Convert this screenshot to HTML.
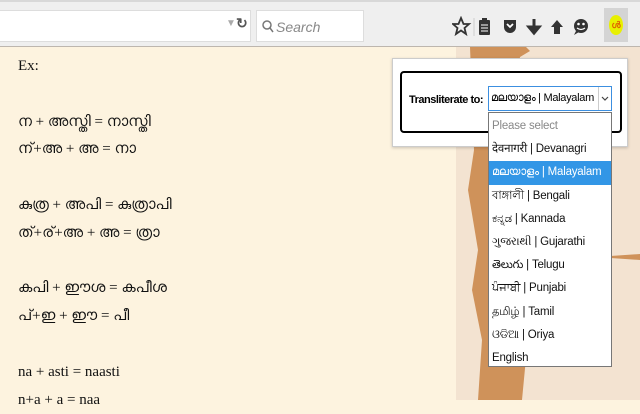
<!DOCTYPE html>
<html><head><meta charset="utf-8"><style>
*{margin:0;padding:0;box-sizing:border-box}
body{width:640px;height:400px;overflow:hidden;position:relative;background:#fdf3df;font-family:"Liberation Serif",serif}
#tb{position:absolute;left:0;top:0;width:640px;height:47px;background:#efefef;border-top:2px solid #d8d8d8;border-bottom:1px solid #bdb6ae}
#url{position:absolute;left:0;top:8px;width:251px;height:32px;background:#fff;border:1px solid #ddd;border-left:none}
#srch{position:absolute;left:256px;top:8px;width:108px;height:32px;background:#fff;border:1px solid #ddd;font:italic 14px "Liberation Sans",sans-serif;color:#888;padding:8px 0 0 19px}
#right{position:absolute;left:456px;top:47px;width:184px;height:353px;background:#f3e3d1}
#ex{position:absolute;left:18px;top:53px;font-size:15px;color:#111;line-height:27.8px}
#panel{position:absolute;left:392px;top:58px;width:236px;height:89px;background:#fff;border:1px solid #ccc;box-shadow:0 1px 3px rgba(0,0,0,.2)}
#box{position:absolute;left:7px;top:12px;width:222px;height:62px;border:2px solid #000;border-radius:4px}
#lab{position:absolute;left:7px;top:21px;font:bold 11px "Liberation Sans",sans-serif;color:#000;letter-spacing:-0.5px}
#sel{position:absolute;left:488px;top:86px;width:124px;height:25px;border:1px solid #3c8fe0;background:#fff;font:11px "Liberation Sans",sans-serif;padding:5px 2px;overflow:hidden;white-space:nowrap;letter-spacing:-0.3px}
#sel .a{position:absolute;right:0;top:0;width:13px;height:23px;border-left:1px solid #ccc;background:#fff}
#list{position:absolute;left:488px;top:112px;width:124px;height:255px;background:#fff;border:1px solid #777;font:11.5px "Liberation Sans","Noto Sans CJK SC",sans-serif;padding-top:2px;letter-spacing:-0.2px}
#list div{height:23.2px;line-height:23px;padding-left:3px;color:#111;white-space:nowrap;overflow:hidden}
#list .p{color:#888}
#list .h{background:#3296e6;color:#fff}
</style></head><body>
<div id="tb">
<div id="url"><span style="position:absolute;left:226px;top:7px;color:#aaa;font:10px sans-serif">▼</span><span style="position:absolute;left:236px;top:4px;color:#555;font:bold 14px sans-serif">↻</span></div>
<div id="srch"><svg style="position:absolute;left:5px;top:9px" width="12" height="13"><circle cx="5" cy="5" r="4" fill="none" stroke="#777" stroke-width="1.5"/><line x1="8" y1="8" x2="11" y2="12" stroke="#777" stroke-width="1.5"/></svg>Search</div>
<svg style="position:absolute;left:452px;top:14px" width="190" height="24">
<polygon points="9,2 11.5,8 17,8 12.5,12 14,18 9,14.5 4,18 5.5,12 1,8 6.5,8" fill="none" stroke="#333" stroke-width="1.8"/>
<line x1="22" y1="2" x2="22" y2="20" stroke="#ccc"/>
<rect x="27" y="4" width="11" height="15" rx="1" fill="#333"/><rect x="30" y="2" width="5" height="3" fill="#333"/><line x1="29" y1="9" x2="36" y2="9" stroke="#fff"/><line x1="29" y1="12" x2="36" y2="12" stroke="#fff"/><line x1="29" y1="15" x2="36" y2="15" stroke="#fff"/>
<path d="M52 4h12v7a6 6 0 0 1-12 0z" fill="#333"/><path d="M55 8l3 3 3-3" fill="none" stroke="#fff" stroke-width="1.8"/>
<path d="M82 3v10M77 11l5 6 5-6z" stroke="#333" stroke-width="3" fill="#333"/>
<path d="M105 4l-6 7h3v7h6v-7h3z" fill="#333"/>
<circle cx="129" cy="10" r="7" fill="#333"/><circle cx="126.5" cy="8" r="1.3" fill="#fff"/><circle cx="131.5" cy="8" r="1.3" fill="#fff"/><path d="M125 12q4 3 8 0" stroke="#fff" fill="none" stroke-width="1.3"/><path d="M124 15l-2 4 5-3z" fill="#333"/>
</svg>
<div style="position:absolute;left:604px;top:6px;width:24px;height:34px;background:#d4d4d4"></div>
<div style="position:absolute;left:609px;top:13px;width:14px;height:20px;border-radius:50%;background:#e8f000;color:#e06000;font:bold 9px sans-serif;text-align:center;line-height:20px">ൾ</div>
</div>
<div id="right"><svg width="184" height="353"><path d="M14 0h46l8 -2 6 6-10 6 -8 50 -4 40 12 30 -10 20 10 40 -4 60 12 40 -6 63h-44l4-60 -10-50 6-40 -10-60 6-40z" fill="#cf925a"/><path d="M140 210l44 -3v6z" fill="#cf925a"/></svg></div>
<div id="ex">Ex:<br><br>ന + അസ്തി = നാസ്തി<br>ന്+അ + അ = നാ<br><br>കുത്ര + അപി = കുത്രാപി<br>ത്+ര്+അ + അ = ത്രാ<br><br>കപി + ഈശ = കപീശ<br>പ്+ഇ + ഈ = പീ<br><br>na + asti = naasti<br>n+a + a = naa</div>
<div id="panel"><div id="box"><div id="lab">Transliterate to:</div></div></div>
<div id="sel">മലയാളം | Malayalam<span class="a"><svg width="12" height="23"><path d="M3 10l3 3 3-3" fill="none" stroke="#444" stroke-width="1.2"/></svg></span></div>
<div id="list">
<div class="p">Please select</div>
<div>देवनागरी | Devanagri</div>
<div class="h">മലയാളം | Malayalam</div>
<div>বাঙ্গালী | Bengali</div>
<div>ಕನ್ನಡ | Kannada</div>
<div>ગુજરાથી | Gujarathi</div>
<div>తెలుగు | Telugu</div>
<div>ਪੰਜਾਬੀ | Punjabi</div>
<div>தமிழ் | Tamil</div>
<div>ଓଡିଆ | Oriya</div>
<div>English</div>
</div>
</body></html>
